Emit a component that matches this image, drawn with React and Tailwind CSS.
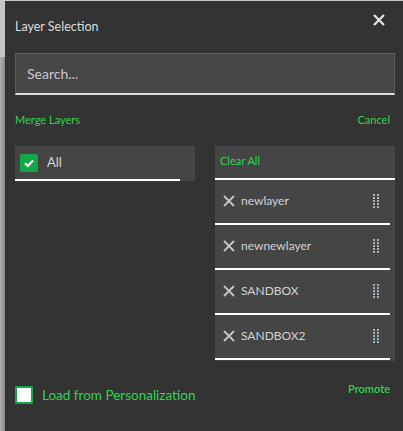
const LAYERS = ['newlayer', 'newnewlayer', 'SANDBOX', 'SANDBOX2']

function Cross({ className, width = 2 }) {
  return (
    <svg viewBox="0 0 12 12" className={className}>
      <path d="M1 1 L11 11 M11 1 L1 11" fill="none" stroke="currentColor" strokeWidth={width} />
    </svg>
  )
}

function Grip() {
  return (
    <div className="grid grid-cols-2 gap-x-[2px] gap-y-[1px]">
      {Array.from({ length: 10 }).map((_, i) => (
        <span key={i} className="block w-[2px] h-[2px] bg-[#9fb0b8]" />
      ))}
    </div>
  )
}

export default function App() {
  return (
    <div className="w-[403px] h-[431px] flex bg-[#c4c4c4] overflow-hidden" style={{ fontFamily: 'Lato, "Noto Sans", sans-serif' }}>
      <div className="w-[5px] flex flex-col">
        <div className="h-[57px] bg-[#c6c6c6]" />
        <div className="flex-1 bg-gradient-to-r from-[#b0b0b0] to-[#8a8a8a]" />
      </div>
      <div className="flex-1 mt-px bg-[#333333] pl-[10px] pr-[8px] flex flex-col">
        <div className="h-[52px] flex items-start justify-between">
          <h1 className="mt-[17px] text-[12.5px] text-[#dcdcdc]">Layer Selection</h1>
          <Cross className="mt-[13px] mr-[10px] w-[12px] h-[12px] text-[#e6e6e6]" width={2.2} />
        </div>

        <div className="h-[42px] bg-[#464646] border border-[#5c5c5c] border-b-2 border-b-[#dedede] flex items-center pl-[11px]">
          <span className="text-[14px] text-[#c8c8c8]">Search...</span>
        </div>

        <div className="mt-[17px] flex justify-between pr-[5px] text-[11px] text-[#2fd34f]">
          <span>Merge Layers</span>
          <span>Cancel</span>
        </div>

        <div className="mt-[17px] flex gap-[20px]">
          <div className="w-[180px] self-start">
            <div className="h-[35px] bg-[#454545] flex items-center pl-[5px]">
              <div className="w-[18px] h-[18px] rounded-[2px] bg-[#12a84a] flex items-center justify-center">
                <svg viewBox="0 0 12 12" className="w-[12px] h-[12px]">
                  <path d="M2 6.3 L4.8 9 L10 3.5" fill="none" stroke="#fff" strokeWidth="2" />
                </svg>
              </div>
              <span className="ml-[9px] text-[13px] text-[#d8d8d8]">All</span>
            </div>
            <div className="-mt-[2px] w-[165px] h-[2px] bg-white" />
          </div>

          <div className="w-[180px] h-[215px] bg-[#454545]">
            <div className="h-[34px] flex items-center pl-[5px] text-[11px] text-[#2fd34f] border-b-2 border-white">
              Clear All
            </div>
            {LAYERS.map((name) => (
              <div key={name} className="w-[175px] h-[45px] flex items-center pl-[8px] pr-[11px] border-b-2 border-white">
                <Cross className="w-[12px] h-[12px] text-[#c4c4c4]" width={1.9} />
                <span className="ml-[6px] text-[12px] text-[#d2d2d2] flex-1">{name}</span>
                <Grip />
              </div>
            ))}
          </div>
        </div>

        <div className="mt-[24px] flex items-start justify-between pr-[5px]">
          <div className="flex items-center">
            <div className="w-[18px] h-[18px] border-2 border-[#12a84a] bg-white rounded-[1px]" />
            <span className="ml-[9px] text-[13.5px] text-[#2fd34f]">Load from Personalization</span>
          </div>
          <span className="-mt-[4px] text-[11px] font-semibold text-[#2fd34f]">Promote</span>
        </div>
      </div>
    </div>
  )
}
